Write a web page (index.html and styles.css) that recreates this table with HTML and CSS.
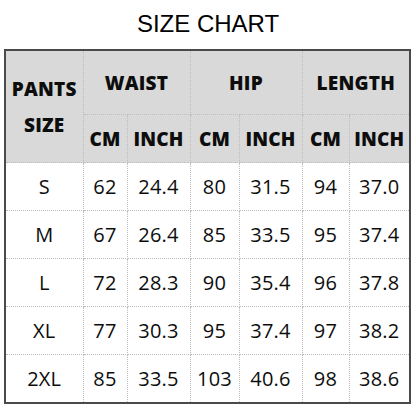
FILE: index.html
```html
<!DOCTYPE html>
<html>
<head>
<meta charset="utf-8">
<link rel="stylesheet" href="styles.css">
</head>
<body>
<h1 class="title">SIZE CHART</h1>
<table class="chart">
  <colgroup>
    <col class="c1"><col class="c2"><col class="c3"><col class="c4"><col class="c5"><col class="c6"><col class="c7">
  </colgroup>
  <thead>
    <tr class="h1">
      <th rowspan="2" class="pants">PANTS<br>SIZE</th>
      <th colspan="2">WAIST</th>
      <th colspan="2">HIP</th>
      <th colspan="2">LENGTH</th>
    </tr>
    <tr class="h2">
      <th>CM</th><th>INCH</th><th>CM</th><th>INCH</th><th>CM</th><th>INCH</th>
    </tr>
  </thead>
  <tbody>
    <tr><td>S</td><td>62</td><td>24.4</td><td>80</td><td>31.5</td><td>94</td><td>37.0</td></tr>
    <tr><td>M</td><td>67</td><td>26.4</td><td>85</td><td>33.5</td><td>95</td><td>37.4</td></tr>
    <tr><td>L</td><td>72</td><td>28.3</td><td>90</td><td>35.4</td><td>96</td><td>37.8</td></tr>
    <tr><td>XL</td><td>77</td><td>30.3</td><td>95</td><td>37.4</td><td>97</td><td>38.2</td></tr>
    <tr><td>2XL</td><td>85</td><td>33.5</td><td>103</td><td>40.6</td><td>98</td><td>38.6</td></tr>
  </tbody>
</table>
</body>
</html>
```
FILE: styles.css
```css
html, body {
  margin: 0;
  padding: 0;
  background: #ffffff;
}
body {
  width: 416px;
  height: 416px;
  overflow: hidden;
}
.title {
  margin: 0;
  height: 49px;
  padding-top: 9px;
  box-sizing: border-box;
  text-align: center;
  font-family: "Liberation Sans", Arial, sans-serif;
  font-weight: normal;
  font-size: 24px;
  line-height: 30px;
  color: #000;
}
.chart {
  margin-left: 4px;
  width: 407px;
  border-collapse: collapse;
  table-layout: fixed;
  border: 2px solid #4a4a4a;
  font-family: "Open Sans", "Noto Sans", sans-serif;
  color: #0d0d0d;
}
.c1 { width: 78px; }
.c2 { width: 44px; }
.c3 { width: 63px; }
.c4 { width: 49px; }
.c5 { width: 63px; }
.c6 { width: 47px; }
.c7 { width: 61px; }
.chart th, .chart td {
  border: 1px dotted #bdbdbd;
  padding: 0;
  text-align: center;
  vertical-align: middle;
  white-space: nowrap;
}
.chart th {
  background: #d9d9d9;
  font-weight: 800;
  font-size: 19px;
  letter-spacing: 0.2px;
}
.h1 th { height: 63px; }
.h2 th { height: 47px; }
.pants { line-height: 36px; }
.chart td {
  height: 47px;
  font-size: 20px;
  letter-spacing: 0.2px;
}
```
